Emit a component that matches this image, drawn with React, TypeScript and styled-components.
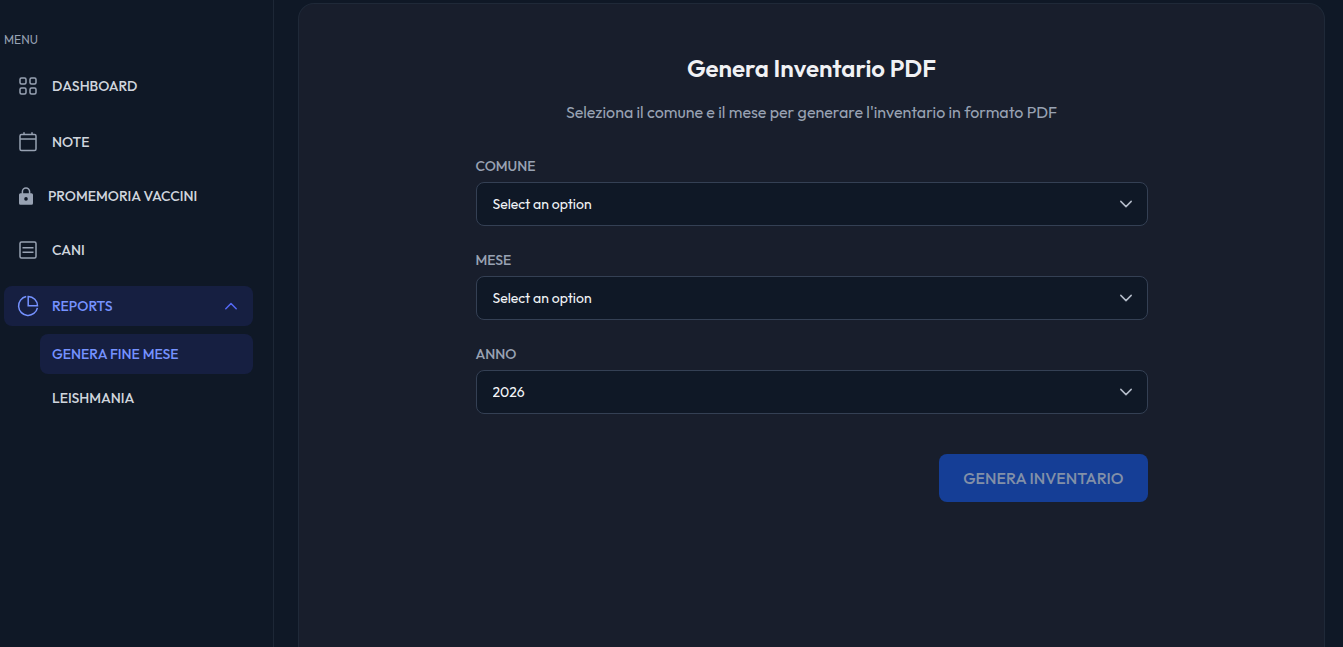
import React from "react";
import styled, { createGlobalStyle, css } from "styled-components";

const GlobalStyle = createGlobalStyle`
  *, *::before, *::after { box-sizing: border-box; }
  body {
    margin: 0;
    background: #0f1826;
    color: #ffffff;
    font-family: Outfit, Lato, "Liberation Sans", sans-serif;
    font-size: 16px;
    line-height: 24px;
    overflow: hidden;
  }
  button, select { font: inherit; }
`;

const Shell = styled.div`
  display: flex;
  min-height: 100vh;
`;

const Sidebar = styled.aside`
  flex: none;
  width: 274px;
  padding: 32px 20px 32px 4px;
  border-right: 1px solid #1d2736;
`;

const SidebarHeading = styled.h2`
  margin: 0 0 18px;
  font-size: 12px;
  line-height: 16px;
  font-weight: 400;
  color: #98a2b3;
`;

const MenuList = styled.ul`
  display: flex;
  flex-direction: column;
  gap: 16px;
  margin: 0;
  padding: 0;
  list-style: none;
`;

const SubMenu = styled.ul`
  display: flex;
  flex-direction: column;
  gap: 4px;
  margin: 8px 0 0 36px;
  padding: 0;
  list-style: none;
`;

const itemStyle = css<{ $active?: boolean }>`
  display: flex;
  align-items: center;
  gap: 12px;
  width: 100%;
  padding: 8px 12px;
  border: 0;
  border-radius: 8px;
  background: ${(p) => (p.$active ? "#161f41" : "transparent")};
  color: ${(p) => (p.$active ? "#7592ff" : "#d0d5dd")};
  font-size: 14px;
  line-height: 20px;
  font-weight: 500;
  text-align: left;
  text-decoration: none;
`;

const MenuLink = styled.a<{ $active?: boolean }>`
  ${itemStyle}
  svg { color: #98a2b3; }
`;

const MenuButton = styled.button<{ $active?: boolean }>`
  ${itemStyle}
  cursor: pointer;
  svg:last-child { margin-left: auto; color: #5468f5; }
`;

const SubLink = styled.a<{ $active?: boolean }>`
  ${itemStyle}
  padding: 10px 12px;
`;

const Main = styled.main`
  display: flex;
  flex: 1;
  min-width: 0;
  padding: 3px 18px 0 24px;
`;

const Card = styled.section`
  flex: 1;
  min-width: 0;
  padding: 48px 40px;
  border: 1px solid #1f2938;
  border-bottom: 0;
  border-radius: 16px 16px 0 0;
  background: #181e2c;
`;

const Title = styled.h1`
  margin: 0 0 16px;
  font-size: 24px;
  line-height: 32px;
  font-weight: 600;
  color: #f0f1f4;
  text-align: center;
`;

const Subtitle = styled.p`
  margin: 0 0 32px;
  color: #98a2b3;
  text-align: center;
`;

const Form = styled.form`
  display: flex;
  flex-direction: column;
  gap: 24px;
  max-width: 672px;
  margin: 0 auto;
`;

const Field = styled.div`
  display: flex;
  flex-direction: column;
  gap: 6px;
`;

const Label = styled.label`
  font-size: 14px;
  line-height: 20px;
  font-weight: 500;
  color: #98a2b3;
`;

const SelectWrap = styled.div`
  display: grid;
  align-items: center;
  > * { grid-area: 1 / 1; }
  svg {
    justify-self: end;
    margin-right: 12px;
    color: #b4bcc9;
    pointer-events: none;
  }
`;

const Select = styled.select`
  appearance: none;
  width: 100%;
  height: 44px;
  padding: 0 40px 0 16px;
  border: 1px solid #344054;
  border-radius: 8px;
  background: #0f1826;
  color: #f2f4f7;
  font-size: 14px;
  line-height: 20px;
`;

const Submit = styled.button`
  align-self: flex-end;
  margin-top: 16px;
  padding: 12px 24px;
  border: 0;
  border-radius: 8px;
  background: #153e96;
  color: #8290a8;
  font-weight: 500;
`;

const Icon = ({ size = 24, children }: { size?: number; children: React.ReactNode }) => (
  <svg width={size} height={size} viewBox={`0 0 ${size} ${size}`} fill="none" stroke="currentColor" strokeWidth="1.5" aria-hidden="true">
    {children}
  </svg>
);

const GridIcon = () => (
  <Icon>
    <rect x="4" y="4" width="6" height="6" rx="1.5" />
    <rect x="14" y="4" width="6" height="6" rx="1.5" />
    <rect x="4" y="14" width="6" height="6" rx="1.5" />
    <rect x="14" y="14" width="6" height="6" rx="1.5" />
  </Icon>
);

const CalendarIcon = () => (
  <Icon>
    <rect x="4" y="4.5" width="16" height="16" rx="1.5" />
    <path d="M4 9h16M8 2.2v2.3M16 2.2v2.3" />
  </Icon>
);

const LockIcon = () => (
  <Icon size={20}>
    <path d="M6.4 8V5.500a3.600 3.600 0 0 1 7.200 0V8" />
    <path
      fill="currentColor"
      stroke="none"
      fillRule="evenodd"
      d="M4.500 7.200h11a1.500 1.500 0 0 1 1.500 1.500v8.600a1.500 1.500 0 0 1-1.500 1.500h-11a1.500 1.500 0 0 1-1.500-1.500V8.700a1.500 1.500 0 0 1 1.500-1.500Zm5.500 3.900a1.800 1.800 0 1 0 0 3.600a1.800 1.800 0 0 0 0-3.600Z"
    />
  </Icon>
);

const ListIcon = () => (
  <Icon>
    <rect x="4" y="4" width="16" height="16" rx="1.5" />
    <path d="M6.500 9.700h11M6.500 14.300h11" />
  </Icon>
);

const PieIcon = () => (
  <Icon>
    <path d="M10.200 2.600A9.500 9.500 0 1 0 21.400 13.800" />
    <path d="M12.200 2.500v9.300h9.300a9.300 9.300 0 0 0-9.300-9.300Z" />
  </Icon>
);

const ChevronIcon = ({ up }: { up?: boolean }) => (
  <Icon size={20}>
    <path d={up ? "M4.800 12.700 10 7.500l5.200 5.200" : "M4.800 7.400 10 12.600l5.200-5.200"} strokeLinecap="round" strokeLinejoin="round" />
  </Icon>
);

const SelectField = ({ id, label, options }: { id: string; label: string; options: string[] }) => (
  <Field>
    <Label htmlFor={id}>{label}</Label>
    <SelectWrap>
      <Select id={id}>
        {options.map((option) => (
          <option key={option}>{option}</option>
        ))}
      </Select>
      <ChevronIcon />
    </SelectWrap>
  </Field>
);

const links = [
  { label: "DASHBOARD", icon: <GridIcon /> },
  { label: "NOTE", icon: <CalendarIcon /> },
  { label: "PROMEMORIA VACCINI", icon: <LockIcon /> },
  { label: "CANI", icon: <ListIcon /> },
];

export default function App() {
  return (
    <>
      <GlobalStyle />
      <Shell>
        <Sidebar>
          <SidebarHeading>MENU</SidebarHeading>
          <nav>
            <MenuList>
              {links.map(({ label, icon }) => (
                <li key={label}>
                  <MenuLink href="#">
                    {icon}
                    {label}
                  </MenuLink>
                </li>
              ))}
              <li>
                <MenuButton type="button" $active aria-expanded="true">
                  <PieIcon />
                  REPORTS
                  <ChevronIcon up />
                </MenuButton>
                <SubMenu>
                  <li>
                    <SubLink href="#" $active aria-current="page">GENERA FINE MESE</SubLink>
                  </li>
                  <li>
                    <SubLink href="#">LEISHMANIA</SubLink>
                  </li>
                </SubMenu>
              </li>
            </MenuList>
          </nav>
        </Sidebar>
        <Main>
          <Card>
            <Title>Genera Inventario PDF</Title>
            <Subtitle>Seleziona il comune e il mese per generare l'inventario in formato PDF</Subtitle>
            <Form>
              <SelectField id="comune" label="COMUNE" options={["Select an option"]} />
              <SelectField id="mese" label="MESE" options={["Select an option"]} />
              <SelectField id="anno" label="ANNO" options={["2026"]} />
              <Submit type="submit" disabled>GENERA INVENTARIO</Submit>
            </Form>
          </Card>
        </Main>
      </Shell>
    </>
  );
}
